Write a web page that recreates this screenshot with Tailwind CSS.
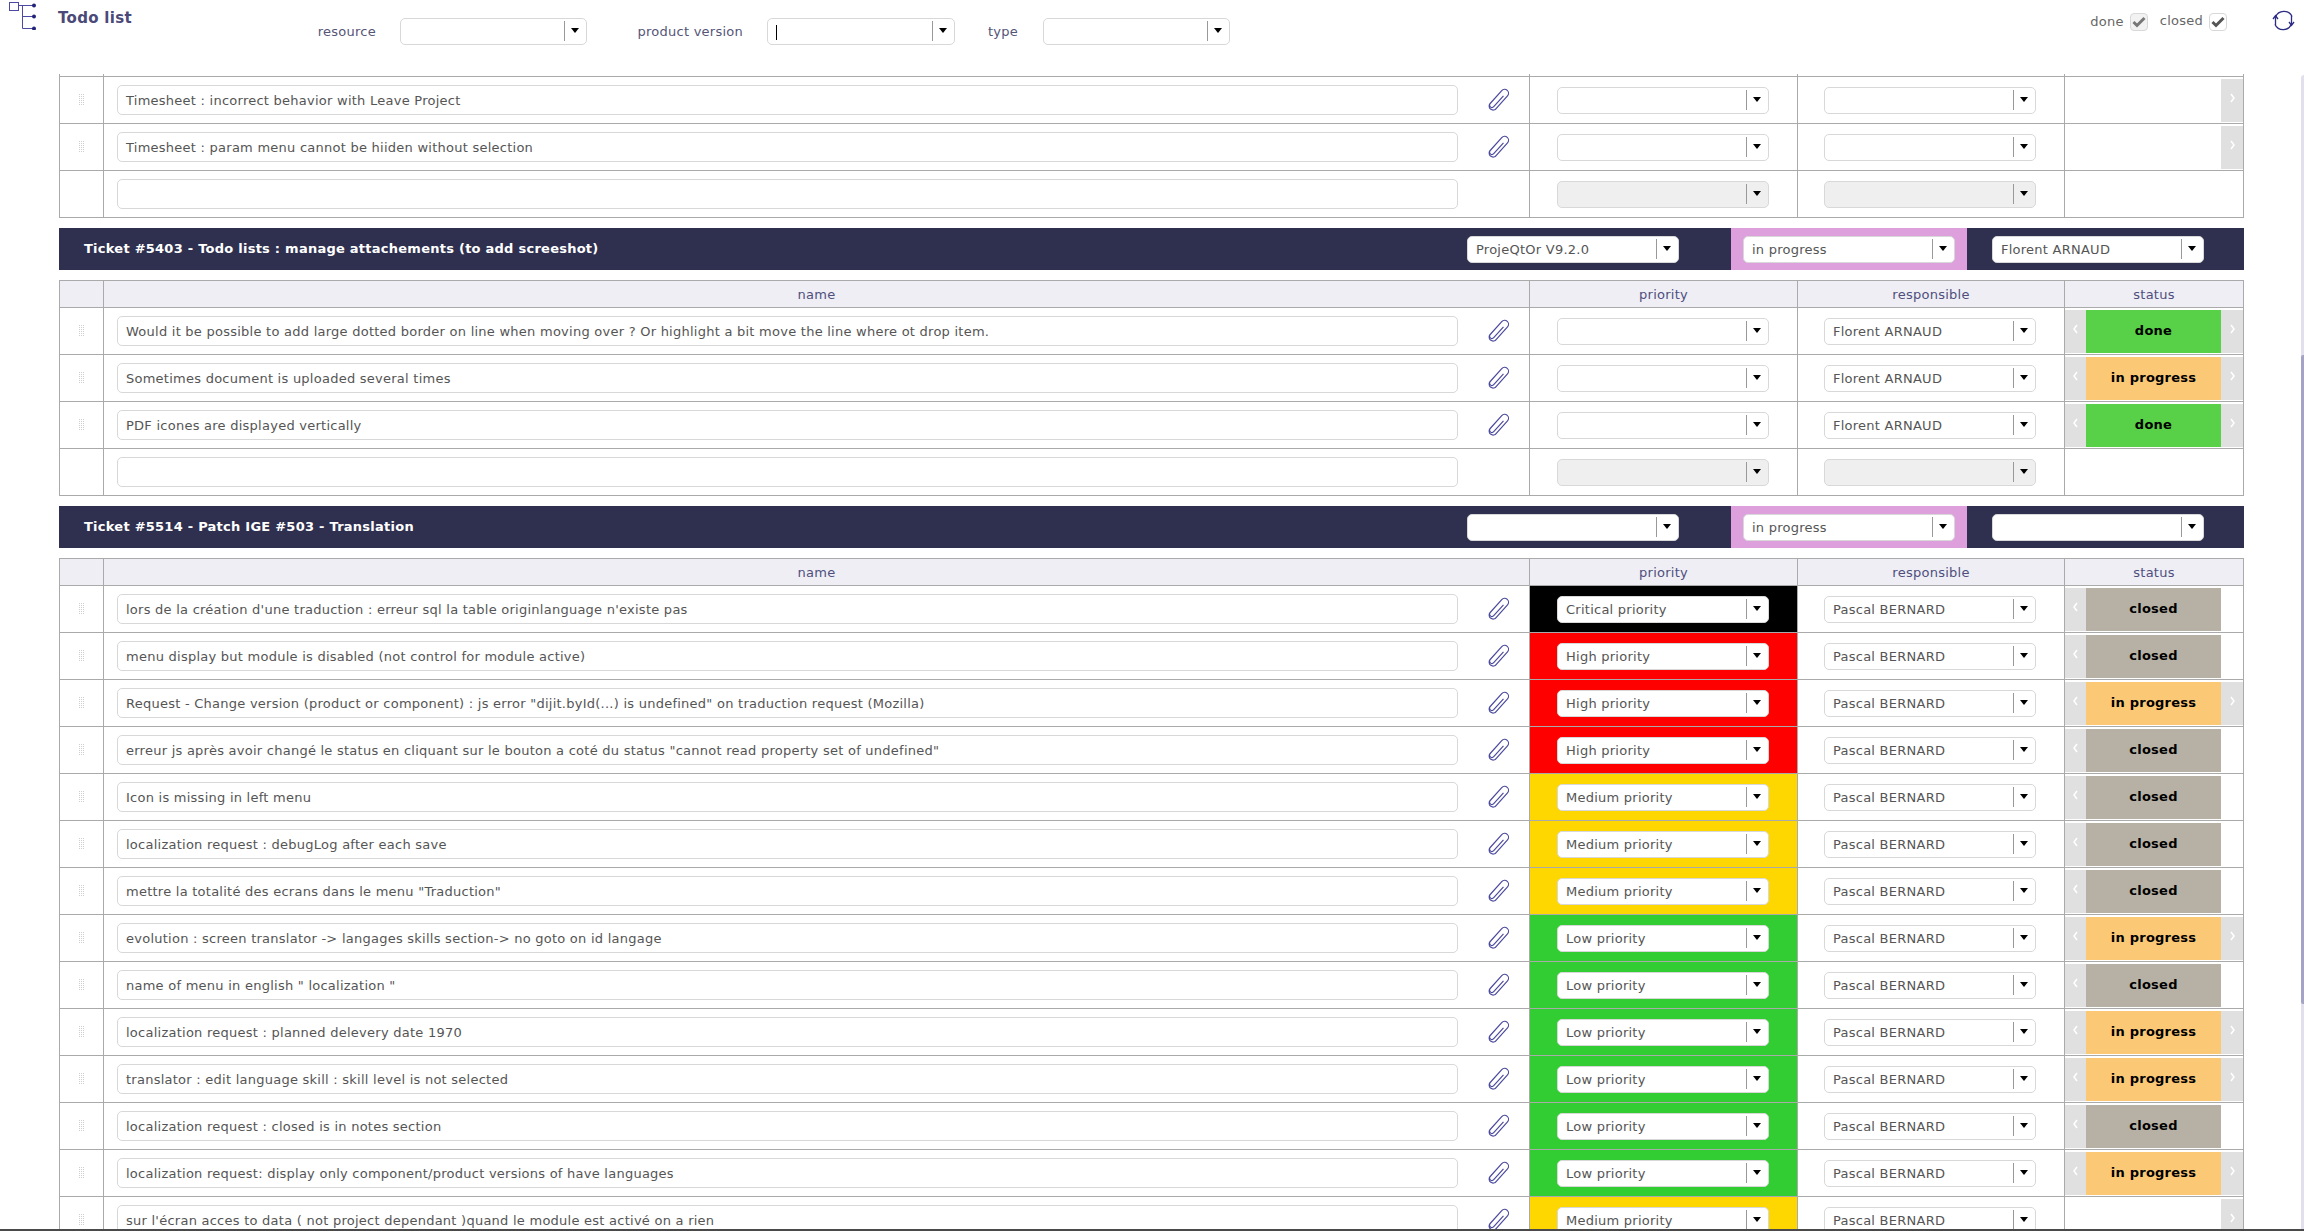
<!DOCTYPE html>
<html lang="en">
<head>
    <meta charset="UTF-8">
    <title>Todo list</title>
    <script src="https://cdn.jsdelivr.net/npm/@tailwindcss/browser@4"></script>
</head>
<body class="bg-white overflow-hidden tracking-[0.25px] font-['DejaVu_Sans','Liberation_Sans',sans-serif]">

<div class="relative h-screen flex flex-col">
    <!-- top filter bar -->
    <div class="h-[74px] shrink-0 flex items-start text-[13px] text-[#555577]">
        <svg class="ml-[9px] mt-[2px] w-[27px] h-[28px] shrink-0" viewBox="0 0 27 28" fill="none">
            <rect x="0.5" y="0.5" width="9" height="8" stroke="#4b4aa0" fill="#fff"/>
            <path d="M10 3.5H25M13.5 3.5V26.5M13.5 14.5H25M13.5 26.5H25" stroke="#4b4aa0"/>
            <circle cx="25" cy="3.5" r="2" fill="#23237a"/>
            <circle cx="25" cy="14.5" r="2" fill="#23237a"/>
            <circle cx="25" cy="26.5" r="2" fill="#23237a"/>
        </svg>
        <div class="ml-[22px] w-[76px] mt-[8px] text-[15px] leading-[20px] font-bold whitespace-nowrap tracking-[0.3px] text-[#4a4978]">Todo list</div>
        <div class="w-[242px] mt-[23px] text-right leading-[18px]">resource</div>
        <div class="ml-[24px] w-[187px] mt-[18px]" data-select=""></div>
        <div class="w-[156px] mt-[23px] text-right leading-[18px]">product version</div>
        <div class="ml-[24px] w-[188px] mt-[18px]" data-select="" data-caret="1"></div>
        <div class="w-[63px] mt-[23px] text-right leading-[18px]">type</div>
        <div class="ml-[25px] w-[187px] mt-[18px]" data-select=""></div>

        <div class="ml-auto flex items-start pr-[9px]">
            <div class="mt-[13px] mr-[6px] leading-[18px] text-[#666]">done</div>
            <div class="mt-[13px] w-[18px] h-[18px] rounded-[4px] border border-[#d8d8d8] bg-[#f2f2f2] flex items-center justify-center">
                <svg class="w-[14px] h-[12px]" viewBox="0 0 14 12" fill="none"><path d="M1.5 6L5 9.5L12.5 2" stroke="#777" stroke-width="3"/></svg>
            </div>
            <div class="ml-[12px] mt-[12px] mr-[6px] leading-[18px] text-[#666]">closed</div>
            <div class="mt-[13px] w-[18px] h-[18px] rounded-[4px] border border-[#d8d8d8] bg-white flex items-center justify-center">
                <svg class="w-[14px] h-[12px]" viewBox="0 0 14 12" fill="none"><path d="M1.5 6L5 9.5L12.5 2" stroke="#555" stroke-width="3"/></svg>
            </div>
            <svg class="ml-[45px] mt-[10px] w-[23px] h-[21px]" viewBox="0 0 23 21" fill="none" stroke="#2d2c85" stroke-width="1.3">
                <path d="M3.5 7A9 9 0 0 1 20 6.5"/>
                <path d="M19.5 14A9 9 0 0 1 3 14.5"/>
                <path d="M3.5 15V6M1 9L3.5 5.5L6 9"/>
                <path d="M19.5 6V15M17 12L19.5 15.5L22 12"/>
            </svg>
        </div>
    </div>

    <!-- scrolling list, filled by the script below -->
    <div id="list" class="flex-1 overflow-hidden text-[13px] text-[#555]"></div>

    <div class="h-[2px] shrink-0 bg-[#4a4a4a]"></div>

    <!-- scrollbar -->
    <div class="absolute right-0 top-[75px] bottom-[2px] w-[3px] bg-[#e1e0ec] rounded-tl-[3px]">
        <div class="mt-[280px] h-[649px] bg-[#a5a3c5] rounded-l-[2px]"></div>
    </div>
</div>

<script>
    const CLIP = `<svg class="w-[24px] h-[24px]" viewBox="0 0 24 24" fill="none" stroke="#4b4a9e" stroke-width="1.1"><g transform="translate(18 0.5) rotate(42) scale(1.08)"><path d="M3.5 6V19.5a2.2 2.2 0 0 1 -4.4 0V3.5a3.6 3.6 0 0 1 7.2 0V19a3.6 3.6 0 0 1 -7.2 1"/></g></svg>`;
    const HANDLE = `<svg class="w-[6px] h-[12px]" viewBox="0 0 6 12" fill="#cfcfcf"><rect x="0" y="0" width="1" height="1"/><rect x="2" y="0" width="1" height="1"/><rect x="4" y="0" width="1" height="1"/><rect x="0" y="2" width="1" height="1"/><rect x="2" y="2" width="1" height="1"/><rect x="4" y="2" width="1" height="1"/><rect x="0" y="4" width="1" height="1"/><rect x="2" y="4" width="1" height="1"/><rect x="4" y="4" width="1" height="1"/><rect x="0" y="6" width="1" height="1"/><rect x="2" y="6" width="1" height="1"/><rect x="4" y="6" width="1" height="1"/><rect x="0" y="8" width="1" height="1"/><rect x="2" y="8" width="1" height="1"/><rect x="4" y="8" width="1" height="1"/><rect x="0" y="10" width="1" height="1"/><rect x="2" y="10" width="1" height="1"/><rect x="4" y="10" width="1" height="1"/></svg>`;

    const GRID = "grid grid-cols-[44px_1426px_268px_267px_178px]";
    const PRIORITY = {
        "Critical priority": "bg-black",
        "High priority": "bg-[#ff0000]",
        "Medium priority": "bg-[#ffd700]",
        "Low priority": "bg-[#32cd32]"
    };
    const STATUS = {
        "done": "bg-[#58d047]",
        "in progress": "bg-[#fbc876]",
        "closed": "bg-[#b6b1a4]"
    };

    function select(text, opts = {}) {
        const bg = opts.disabled ? "bg-[#efefef]" : "bg-white";
        const width = opts.width || "w-full";
        return `<div class="${width} h-[27px] ${bg} border border-[#d8d8d8] rounded-[5px] flex overflow-hidden">
            <div class="flex-1 pl-[8px] leading-[25px] text-[13px] text-[#555] whitespace-nowrap">${opts.caret ? '<span class="inline-block w-px h-[15px] bg-black align-middle"></span>' : text || ""}</div>
            <div class="w-[22px] shrink-0 pr-[2px] mt-[2px] h-[20px] border-l border-[#999] flex justify-center pt-[7px]">
                <div class="w-0 h-0 border-x-[4px] border-x-transparent border-t-[5px] border-t-black"></div>
            </div>
        </div>`;
    }

    function chevron(dir) {
        const d = dir === "left" ? "M5 1L2 5L5 9" : "M2 1L5 5L2 9";
        return `<svg class="mt-[14px] w-[7px] h-[10px]" viewBox="0 0 7 10" fill="none" stroke="#fff" stroke-width="1.5"><path d="${d}"/></svg>`;
    }

    function statusCell(status, hasLeft, hasRight) {
        const left = hasLeft
            ? `<div class="w-[21px] h-full bg-[#e0e0e0] flex justify-center">${chevron("left")}</div>`
            : `<div class="w-[21px]"></div>`;
        const right = hasRight
            ? `<div class="w-[22px] h-full bg-[#e0e0e0] flex justify-center">${chevron("right")}</div>`
            : `<div class="w-[22px]"></div>`;
        const mid = status
            ? `<div class="flex-1 ${STATUS[status]} flex items-center justify-center pb-[2px] text-[13px] font-bold text-black">${status}</div>`
            : `<div class="flex-1"></div>`;
        return `<div class="h-[43px] mt-[2px] flex">${left}${mid}${right}</div>`;
    }

    function row(item) {
        const empty = !item;
        const { name, priority, person, status } = item || {};
        const hasLeft = !empty && !!status;
        // closed tickets have no next step
        const hasRight = !empty && status !== "closed";
        return `<div class="${GRID} h-[47px] border-b border-[#aaa]">
            <div class="border-r border-[#aaa] flex items-center justify-center">${empty ? "" : HANDLE}</div>
            <div class="border-r border-[#aaa] flex items-center pl-[13px]">
                <div class="w-[1341px] h-[30px] shrink-0 border border-[#d8d8d8] rounded-[5px] pl-[8px] leading-[29px] whitespace-nowrap overflow-hidden">${name || ""}</div>
                <div class="ml-[29px] w-[24px] flex justify-center">${empty ? "" : CLIP}</div>
            </div>
            <div class="border-r border-[#aaa] flex items-center pl-[27px] ${PRIORITY[priority] || ""}">${select(priority, { disabled: empty, width: "w-[212px]" })}</div>
            <div class="border-r border-[#aaa] flex items-center pl-[26px]">${select(person, { disabled: empty, width: "w-[212px]" })}</div>
            <div>${empty ? "" : statusCell(status, hasLeft, hasRight)}</div>
        </div>`;
    }

    function band(title, version, state, person) {
        return `<div class="ml-[59px] w-[2185px] h-[42px] bg-[#2f3050] flex items-center mt-[10px]">
            <div class="flex-1 pl-[25px] text-[13px] font-bold text-white whitespace-nowrap">${title}</div>
            ${select(version, { width: "w-[212px]" })}
            <div class="ml-[52px] h-full w-[236px] bg-[#dda0dd] flex items-center justify-center">${select(state, { width: "w-[212px]" })}</div>
            <div class="ml-[25px] mr-[40px]">${select(person, { width: "w-[212px]" })}</div>
        </div>`;
    }

    function tableHead() {
        const cell = "border-r border-[#aaa] text-center leading-[27px]";
        return `<div class="${GRID} h-[28px] border-y border-[#aaa] bg-[#eeeef4] text-[#4f4e7e]">
            <div class="${cell}"></div>
            <div class="${cell}">name</div>
            <div class="${cell}">priority</div>
            <div class="${cell}">responsible</div>
            <div class="text-center leading-[27px]">status</div>
        </div>`;
    }

    function table(head, rows) {
        return `<div class="ml-[59px] w-[2185px] border-x border-[#aaa] ${head ? "mt-[10px]" : ""}">${head ? tableHead() : ""}${rows.join("")}</div>`;
    }

    // Rows of the first ticket are scrolled partly out of view
    const firstRows = [
        { name: "Timesheet : incorrect behavior with Leave Project" },
        { name: "Timesheet : param menu cannot be hiiden without selection" }
    ];
    const stub = `<div class="${GRID} h-[3px] border-b border-[#aaa]">
        <div class="border-r border-[#aaa]"></div><div class="border-r border-[#aaa]"></div><div class="border-r border-[#aaa]"></div><div class="border-r border-[#aaa]"></div><div></div>
    </div>`;

    const fa = "Florent ARNAUD", pb = "Pascal BERNARD";
    const ticket5403 = [
        { name: "Would it be possible to add large dotted border on line when moving over ? Or highlight a bit move the line where ot drop item.", person: fa, status: "done" },
        { name: "Sometimes document is uploaded several times", person: fa, status: "in progress" },
        { name: "PDF icones are displayed vertically", person: fa, status: "done" }
    ];
    const ticket5514 = [
        { name: "lors de la création d'une traduction : erreur sql la table originlanguage n'existe pas", priority: "Critical priority", person: pb, status: "closed" },
        { name: "menu display but module is disabled (not control for module active)", priority: "High priority", person: pb, status: "closed" },
        { name: 'Request - Change version (product or component) : js error "dijit.byId(...) is undefined" on traduction request (Mozilla)', priority: "High priority", person: pb, status: "in progress" },
        { name: 'erreur js après avoir changé le status en cliquant sur le bouton a coté du status "cannot read property set of undefined"', priority: "High priority", person: pb, status: "closed" },
        { name: "Icon is missing in left menu", priority: "Medium priority", person: pb, status: "closed" },
        { name: "localization request : debugLog after each save", priority: "Medium priority", person: pb, status: "closed" },
        { name: 'mettre la totalité des ecrans dans le menu "Traduction"', priority: "Medium priority", person: pb, status: "closed" },
        { name: "evolution : screen translator -&gt; langages skills section-&gt; no goto on id langage", priority: "Low priority", person: pb, status: "in progress" },
        { name: 'name of menu in english " localization "', priority: "Low priority", person: pb, status: "closed" },
        { name: "localization request : planned delevery date 1970", priority: "Low priority", person: pb, status: "in progress" },
        { name: "translator : edit language skill : skill level is not selected", priority: "Low priority", person: pb, status: "in progress" },
        { name: "localization request : closed is in notes section", priority: "Low priority", person: pb, status: "closed" },
        { name: "localization request: display only component/product versions of have languages", priority: "Low priority", person: pb, status: "in progress" },
        { name: "sur l'écran acces to data ( not project dependant )quand le module est activé on a rien", priority: "Medium priority", person: pb }
    ];

    document.getElementById("list").innerHTML =
        `<div class="ml-[59px] w-[2185px] border-x border-[#aaa]">${stub}${firstRows.map(row).join("")}${row(null)}</div>` +
        band("Ticket #5403 - Todo lists : manage attachements (to add screeshot)", "ProjeQtOr V9.2.0", "in progress", fa) +
        table(true, [...ticket5403.map(row), row(null)]) +
        band("Ticket #5514 - Patch IGE #503 - Translation", "", "in progress", "") +
        table(true, ticket5514.map(row));

    document.querySelectorAll("[data-select]").forEach(el => {
        el.innerHTML = select("", { caret: el.dataset.caret });
    });
</script>
</body>
</html>
